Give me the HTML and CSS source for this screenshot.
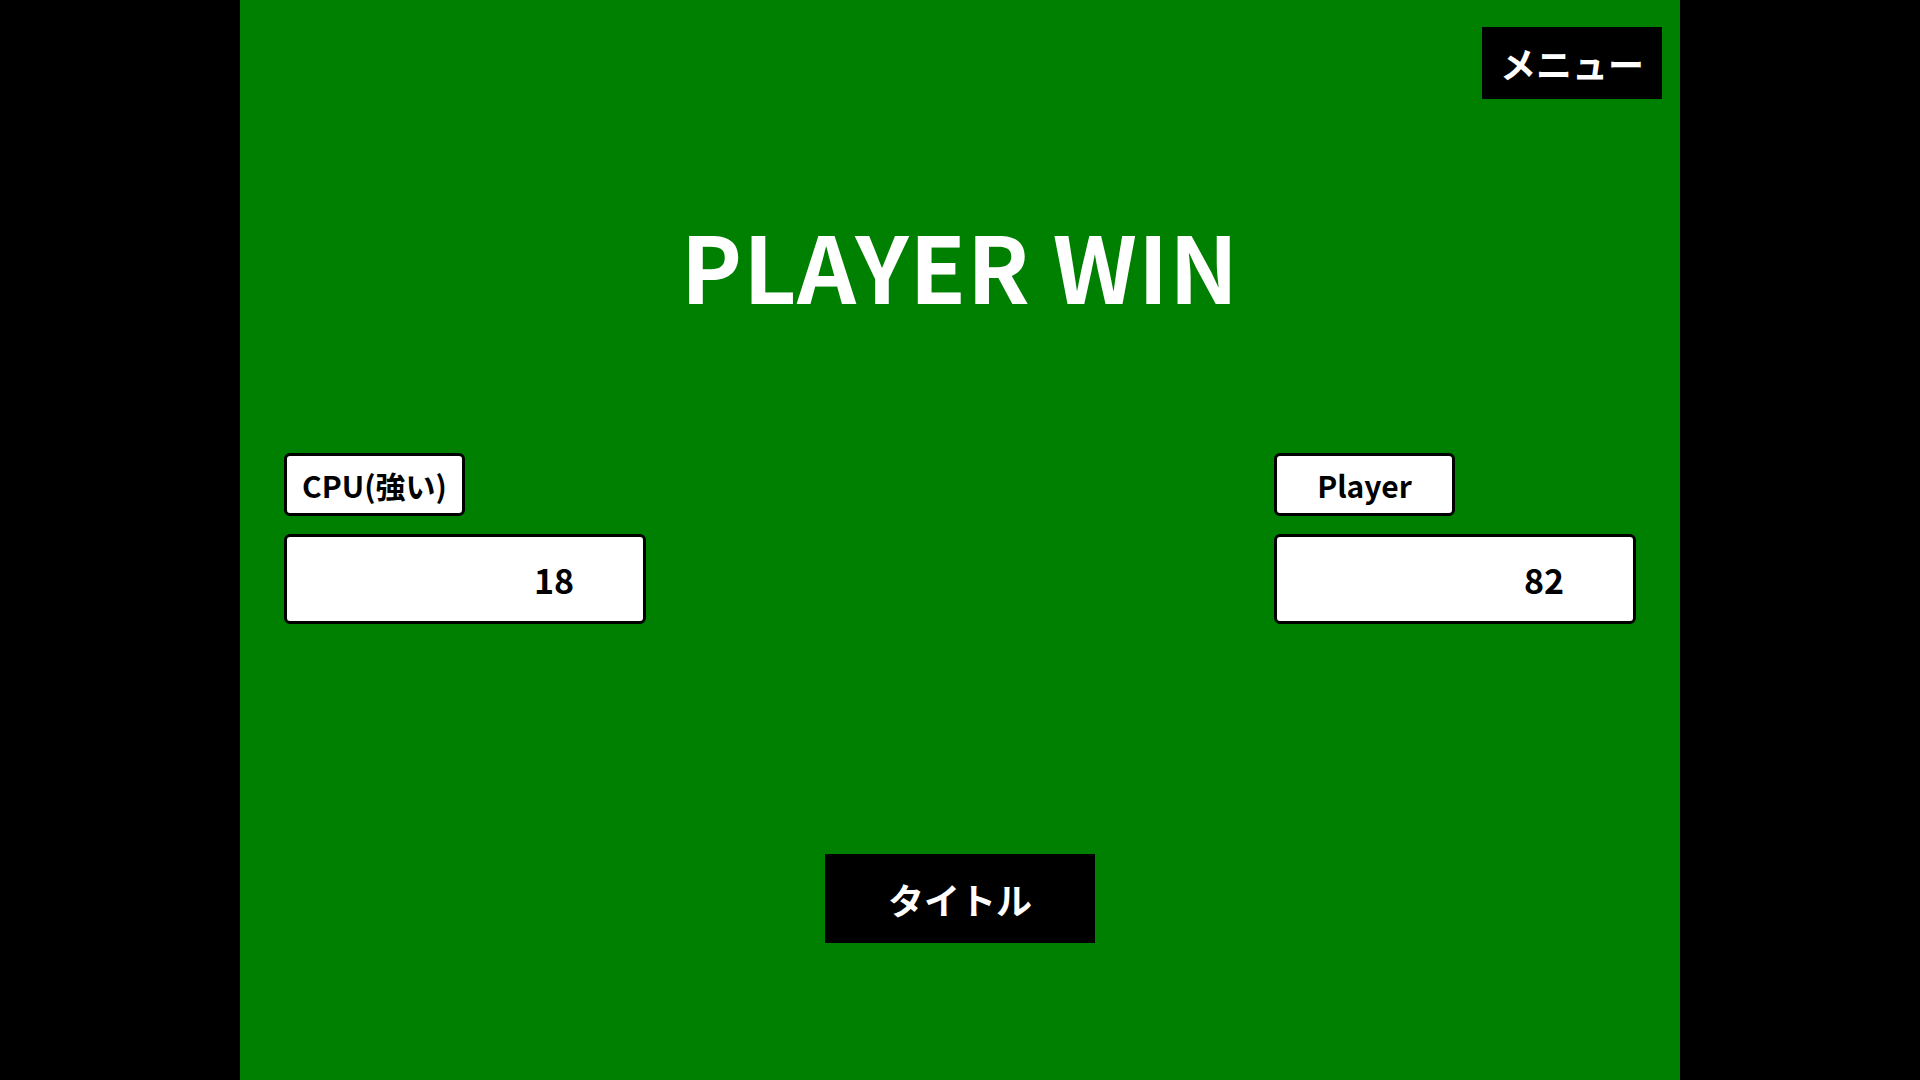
FILE: index.html
```html
<!DOCTYPE html>
<html lang="ja">
<head>
<meta charset="utf-8">
<title>Result</title>
<link rel="stylesheet" href="styles.css">
</head>
<body>
<div class="stage">
  <div class="topbar">
    <div class="menu-btn">メニュー</div>
  </div>
  <h1 class="result">PLAYER WIN</h1>
  <div class="players">
    <div class="player">
      <div class="name">CPU(強い)</div>
      <div class="score">18</div>
    </div>
    <div class="player">
      <div class="name">Player</div>
      <div class="score">82</div>
    </div>
  </div>
  <div class="bottom">
    <div class="title-btn">タイトル</div>
  </div>
</div>
</body>
</html>
```

FILE: styles.css
```css
html, body {
  margin: 0;
  padding: 0;
  background: #000;
  height: 100%;
}
body {
  font-family: "Noto Sans CJK JP", "Noto Sans", sans-serif;
  display: flex;
  justify-content: center;
}
.stage {
  width: 1440px;
  height: 1080px;
  background: #008000;
  display: flex;
  flex-direction: column;
  box-sizing: border-box;
}
.topbar {
  display: flex;
  justify-content: flex-end;
  padding: 27px 18px 0 0;
}
.menu-btn {
  width: 180px;
  height: 72px;
  background: #000;
  color: #fff;
  font-size: 36px;
  font-weight: 700;
  display: flex;
  align-items: center;
  justify-content: center;
}
.result {
  margin: 115px 0 0 0;
  text-align: center;
  color: #fff;
  font-size: 92px;
  font-weight: 700;
  line-height: 100px;
  letter-spacing: 1px;
}
.players {
  display: flex;
  justify-content: space-between;
  padding: 0 44px;
  margin-top: 139px;
}
.player {
  display: flex;
  flex-direction: column;
  gap: 18px;
}
.name {
  width: 181px;
  height: 63px;
  box-sizing: border-box;
  background: #fff;
  border: 3px solid #000;
  border-radius: 6px;
  color: #000;
  font-size: 30px;
  font-weight: 700;
  display: flex;
  align-items: center;
  justify-content: center;
}
.score {
  width: 362px;
  height: 90px;
  box-sizing: border-box;
  background: #fff;
  border: 3px solid #000;
  border-radius: 6px;
  color: #000;
  font-size: 34px;
  font-weight: 700;
  display: flex;
  align-items: center;
  justify-content: flex-end;
  padding-right: 69px;
}
.bottom {
  display: flex;
  justify-content: center;
  margin-top: 230px;
}
.title-btn {
  width: 270px;
  height: 89px;
  background: #000;
  color: #fff;
  font-size: 36px;
  font-weight: 700;
  display: flex;
  align-items: center;
  justify-content: center;
}
```
